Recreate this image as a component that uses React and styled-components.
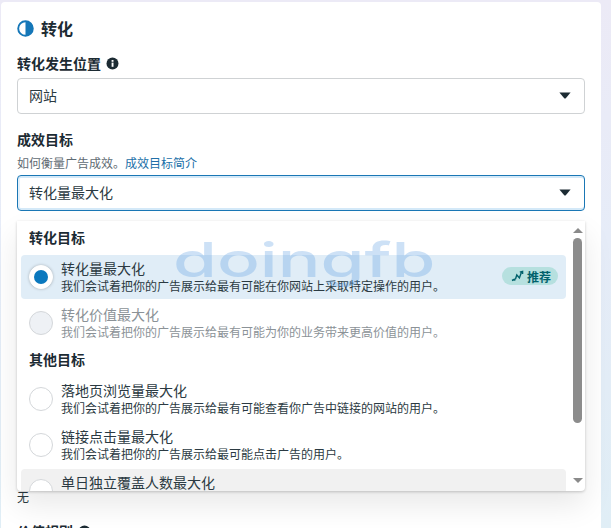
import React from 'react';
import styled, { createGlobalStyle } from 'styled-components';

const Global = createGlobalStyle`
  html, body { margin: 0; padding: 0; height: 528px; overflow: hidden; }
  body { font-family: "Noto Sans CJK SC", "Noto Sans", sans-serif; color: #1c2b33; }
  * { box-sizing: border-box; }
`;
const Page = styled.div`
  width: 611px; height: 528px; overflow: hidden; position: relative;
  padding: 2px 10px 0 1px;
  background: linear-gradient(180deg, #eceaf6 0%, #e6ecf8 45%, #e0eef6 100%);
`;
const Card = styled.section`
  position: relative; height: 540px; background: #fff; border-radius: 4px 4px 0 0;
  padding: 15px 16px 0 16px;
`;
const Heading = styled.h2`
  display: flex; align-items: center; gap: 7px; margin: 0 0 14px; height: 22px;
  font-size: 16px; line-height: 22px; font-weight: 700;
`;
const Field = styled.div` margin-bottom: ${p => p.$mb ?? 15}px; `;
const Label = styled.div`
  display: flex; align-items: center; gap: 5px; height: 20px; margin-bottom: ${p => p.$mb ?? 4}px;
  font-size: 14px; line-height: 20px; font-weight: 700; color: #1c2b33;
`;
const Help = styled.div`
  height: 18px; margin-bottom: 3px; font-size: 12px; line-height: 18px; color: #5f6b73;
  a { color: #216fa8; text-decoration: none; }
`;
const Select = styled.div`
  display: flex; align-items: center; justify-content: space-between;
  width: 568px; height: 36px; padding: 0 13px 2px 11px; background: #fff;
  border: 1px solid ${p => p.$focus ? '#1a77b5' : '#cfd2d4'}; border-radius: 4px;
  font-size: 14px; color: #2b3a42;
  box-shadow: ${p => p.$focus ? 'inset 0 2px 0 #d4e9f8, inset 0 -2px 0 #d4e9f8, inset 2px 0 0 #e4f1fb' : 'none'};
`;
const Menu = styled.div`
  position: absolute; left: 16px; top: 219px; width: 568px; height: 270px; display: flex;
  background: #fff; overflow: hidden; border-radius: 0 0 4px 4px; z-index: 2;
  box-shadow: 0 1px 3px rgba(0,0,0,.2), 0 14px 30px rgba(0,0,0,.09);
`;
const List = styled.div` flex: 1; min-width: 0; overflow: hidden; padding: 6px 0 0 4px; `;
const GroupTitle = styled.div`
  height: 20px; margin: 0 0 ${p => p.$mb ?? 8}px 8px; font-size: 14px; line-height: 20px; font-weight: 700; color: #1c2b33;
`;
const Row = styled.div`
  display: flex; align-items: center; gap: 8px; height: 44px; margin-bottom: ${p => p.$mb ?? 2}px;
  padding: 0 8px; border-radius: 4px; position: relative;
  background: ${p => p.$tone === 'selected' ? '#e0edf7' : p.$tone === 'hover' ? '#f1f1f1' : 'transparent'};
`;
const Radio = styled.span`
  flex: none; width: 24px; height: 24px; border-radius: 50%;
  display: flex; align-items: center; justify-content: center;
  background: ${p => p.$disabled ? '#eef1f5' : '#fff'};
  border: 1px solid ${p => p.$checked ? '#fff' : '#d4d7da'};
  box-shadow: ${p => p.$checked ? '0 0 3px rgba(0,0,0,.25)' : 'none'};
  &::after {
    content: ''; display: ${p => p.$checked ? 'block' : 'none'};
    width: 14px; height: 14px; border-radius: 50%; background: #0a78be;
  }
`;
const RowText = styled.div` flex: 1; min-width: 0; margin-top: -1px; `;
const RowTitle = styled.div`
  font-size: 14px; line-height: 18px; color: ${p => p.$disabled ? '#8b9297' : '#2b3a42'};
`;
const RowDesc = styled.div`
  font-size: 12px; line-height: 17px; white-space: nowrap; color: ${p => p.$disabled ? '#8b9297' : '#2b3a42'};
`;
const Badge = styled.span`
  display: flex; align-items: center; gap: 3px; flex: none; height: 18px; padding: 0 7px 0 9px; margin: -2px 0 0;
  border-radius: 9px; background: #b6e0df; color: #00616b; font-size: 12px; font-weight: 700;
`;
const Scrollbar = styled.div`
  flex: none; width: 19px; padding: 0 3px 0 7px; display: flex; flex-direction: column; align-items: center;
`;
const Arrow = styled.span`
  flex: none; width: 0; height: 0; border-left: 5px solid transparent; border-right: 5px solid transparent;
  ${p => p.$down ? 'border-top: 5px solid #8a8a8a; margin-top: auto; margin-bottom: 8px;' : 'border-bottom: 5px solid #8a8a8a; margin-top: 7px;'}
`;
const Thumb = styled.div` flex: none; width: 9px; height: 185px; margin-top: 5px; background: #8c8c8c; border-radius: 5px; `;
const Mark = styled.div`
  position: absolute; left: 172px; top: 234px; z-index: 3; pointer-events: none; transform-origin: 0 0;
  transform: scaleX(1.48); font-family: "Inter", "Noto Sans", sans-serif; font-size: 48px; line-height: 48px;
  font-weight: 500; letter-spacing: 0; color: rgba(90,155,225,.3); white-space: nowrap;
`;
const Below = styled.div` padding-top: 277px; `;
const Plain = styled.div` font-size: 12px; line-height: 18px; color: #2b3a42; margin-bottom: 15px; `;

const Half = () => (
  <svg width="17" height="17" viewBox="0 0 17 17">
    <circle cx="8.5" cy="8.5" r="7.3" fill="#fff" stroke="#1577b8" strokeWidth="1.9" />
    <path d="M8.5 1.2a7.3 7.3 0 0 1 0 14.6z" fill="#1577b8" />
  </svg>
);
const Info = () => (
  <svg width="13" height="13" viewBox="0 0 13 13">
    <circle cx="6.5" cy="6.5" r="6" fill="#1c2b33" />
    <rect x="5.6" y="5.6" width="1.9" height="4.2" fill="#fff" />
    <rect x="5.6" y="3" width="1.9" height="1.8" fill="#fff" />
  </svg>
);
const Caret = () => (
  <svg width="12" height="7" viewBox="0 0 12 7"><path d="M.4.6h11.2L7 5.9q-1 1-2 0z" fill="#1c2b33" /></svg>
);
const Trend = () => (
  <svg width="13" height="12" viewBox="0 0 13 12" fill="none" stroke="#00616b" strokeWidth="1.4">
    <path d="M1 10.5l2-1M4.5 9l1.3-4 2.6 3L10.5 2" />
    <circle cx="3.6" cy="9.7" r="1.1" fill="#00616b" stroke="none" />
    <path d="M8.8 2.2l2.8-.8v2.6" />
  </svg>
);

const DESC = '我们会试着把你的广告展示给';

export default function App() {
  return (
    <Page>
      <Global />
      <Card>
        <Heading><Half />转化</Heading>
        <Field>
          <Label $mb={5}>转化发生位置 <Info /></Label>
          <Select>网站<Caret /></Select>
        </Field>
        <Field $mb={0}>
          <Label $mb={5}>成效目标</Label>
          <Help>如何衡量广告成效。<a href="#x">成效目标简介</a></Help>
          <Select $focus>转化量最大化<Caret /></Select>
        </Field>
        <Below>
          <Plain>无</Plain>
          <Label>价值规则 <Info /></Label>
        </Below>
        <Menu>
          <List>
            <GroupTitle>转化目标</GroupTitle>
            <Row $tone="selected">
              <Radio $checked />
              <RowText>
                <RowTitle>转化量最大化</RowTitle>
                <RowDesc>{DESC}最有可能在你网站上采取特定操作的用户。</RowDesc>
              </RowText>
              <Badge><Trend />推荐</Badge>
            </Row>
            <Row $mb={4}>
              <Radio $disabled />
              <RowText>
                <RowTitle $disabled>转化价值最大化</RowTitle>
                <RowDesc $disabled>{DESC}最有可能为你的业务带来更高价值的用户。</RowDesc>
              </RowText>
            </Row>
            <GroupTitle $mb={8}>其他目标</GroupTitle>
            <Row>
              <Radio />
              <RowText>
                <RowTitle>落地页浏览量最大化</RowTitle>
                <RowDesc>{DESC}最有可能查看你广告中链接的网站的用户。</RowDesc>
              </RowText>
            </Row>
            <Row>
              <Radio />
              <RowText>
                <RowTitle>链接点击量最大化</RowTitle>
                <RowDesc>{DESC}最可能点击广告的用户。</RowDesc>
              </RowText>
            </Row>
            <Row $tone="hover">
              <Radio />
              <RowText>
                <RowTitle>单日独立覆盖人数最大化</RowTitle>
                <RowDesc>{DESC}尽可能多的用户。</RowDesc>
              </RowText>
            </Row>
          </List>
          <Scrollbar>
            <Arrow />
            <Thumb />
            <Arrow $down />
          </Scrollbar>
        </Menu>
        <Mark>doingfb</Mark>
      </Card>
    </Page>
  );
}
